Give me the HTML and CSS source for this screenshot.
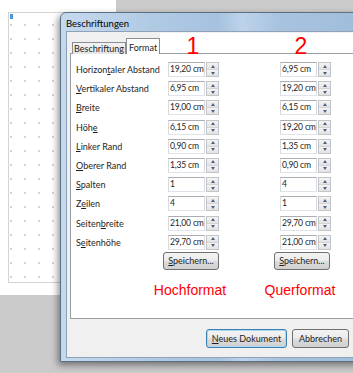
FILE: index.html
```html
<!DOCTYPE html>
<html lang="de">
<head>
<meta charset="utf-8">
<title>Beschriftungen</title>
<link rel="stylesheet" href="styles.css">
</head>
<body>
<div class="screen">
  <div class="page">
    <div class="area"><span class="cursor"></span></div>
  </div>

  <div class="dialog">
    <div class="titlebar">Beschriftungen</div>
    <div class="client">
      <div class="tabs">
        <div class="tab">Beschriftung</div>
        <div class="tab active">Format</div>
        <div class="filler"></div>
      </div>
      <div class="panel">
        <div class="grid">
          <div class="label">Horizon<u>t</u>aler Abstand</div>
          <div class="spinbox"><span class="field">19,20 cm</span><span class="spin"><i class="up"></i><i class="down"></i></span></div>
          <div class="spinbox"><span class="field">6,95 cm</span><span class="spin"><i class="up"></i><i class="down"></i></span></div>

          <div class="label"><u>V</u>ertikaler Abstand</div>
          <div class="spinbox"><span class="field">6,95 cm</span><span class="spin"><i class="up"></i><i class="down"></i></span></div>
          <div class="spinbox"><span class="field">19,20 cm</span><span class="spin"><i class="up"></i><i class="down"></i></span></div>

          <div class="label"><u>B</u>reite</div>
          <div class="spinbox"><span class="field">19,00 cm</span><span class="spin"><i class="up"></i><i class="down"></i></span></div>
          <div class="spinbox"><span class="field">6,15 cm</span><span class="spin"><i class="up"></i><i class="down"></i></span></div>

          <div class="label">Höh<u>e</u></div>
          <div class="spinbox"><span class="field">6,15 cm</span><span class="spin"><i class="up"></i><i class="down"></i></span></div>
          <div class="spinbox"><span class="field">19,20 cm</span><span class="spin"><i class="up"></i><i class="down"></i></span></div>

          <div class="label"><u>L</u>inker Rand</div>
          <div class="spinbox"><span class="field">0,90 cm</span><span class="spin"><i class="up"></i><i class="down"></i></span></div>
          <div class="spinbox"><span class="field">1,35 cm</span><span class="spin"><i class="up"></i><i class="down"></i></span></div>

          <div class="label"><u>O</u>berer Rand</div>
          <div class="spinbox"><span class="field">1,35 cm</span><span class="spin"><i class="up"></i><i class="down"></i></span></div>
          <div class="spinbox"><span class="field">0,90 cm</span><span class="spin"><i class="up"></i><i class="down"></i></span></div>

          <div class="label"><u>S</u>palten</div>
          <div class="spinbox"><span class="field">1</span><span class="spin"><i class="up"></i><i class="down"></i></span></div>
          <div class="spinbox"><span class="field">4</span><span class="spin"><i class="up"></i><i class="down"></i></span></div>

          <div class="label">Z<u>e</u>ilen</div>
          <div class="spinbox"><span class="field">4</span><span class="spin"><i class="up"></i><i class="down"></i></span></div>
          <div class="spinbox"><span class="field">1</span><span class="spin"><i class="up"></i><i class="down"></i></span></div>

          <div class="label">Seiten<u>b</u>reite</div>
          <div class="spinbox"><span class="field">21,00 cm</span><span class="spin"><i class="up"></i><i class="down"></i></span></div>
          <div class="spinbox"><span class="field">29,70 cm</span><span class="spin"><i class="up"></i><i class="down"></i></span></div>

          <div class="label">S<u>e</u>itenhöhe</div>
          <div class="spinbox"><span class="field">29,70 cm</span><span class="spin"><i class="up"></i><i class="down"></i></span></div>
          <div class="spinbox"><span class="field">21,00 cm</span><span class="spin"><i class="up"></i><i class="down"></i></span></div>

          <div class="label"></div>
          <button class="btn save b1"><u>S</u>peichern...</button>
          <button class="btn save b2"><u>S</u>peichern...</button>
        </div>
      </div>
      <div class="footer">
        <button class="btn default"><u>N</u>eues Dokument</button>
        <button class="btn cancel">Abbrechen</button>
      </div>
    </div>

    <span class="note num n1">1</span>
    <span class="note num n2">2</span>
    <span class="note word w1">Hochformat</span>
    <span class="note word w2">Querformat</span>
  </div>
</div>
</body>
</html>
```

FILE: styles.css
```css
* { box-sizing: border-box; }
html, body { margin: 0; padding: 0; }
body {
  width: 353px;
  height: 373px;
  overflow: hidden;
  background: #cbcbcb;
  font-family: Lato, "Liberation Sans", sans-serif;
  color: #1e1e1e;
}
.screen {
  position: relative;
  width: 353px;
  height: 373px;
  overflow: hidden;
  background: #cbcbcb;
}

/* document page behind the dialog */
.page {
  position: absolute;
  left: 0;
  top: 0;
  width: 116px;
  height: 295px;
  background: #fff;
  padding: 12px 0 0 8px;
}
.area {
  height: 271px;
  border: 1px solid #d4d4d4;
  border-right: none;
  background-image: radial-gradient(circle, #d2d2d2 0.7px, transparent 1.1px);
  background-size: 14px 14px;
  background-position: 9px 5px;
  padding: 1px 0 0 1px;
}
.cursor {
  display: block;
  width: 3px;
  height: 5px;
  background: #4f93d8;
}

/* dialog window */
.dialog {
  position: absolute;
  left: 60px;
  top: 12px;
  width: 304px;
  height: 350px;
  border: 1px solid #5f6f82;
  border-radius: 6px 6px 0 0;
  padding: 0 5px 3px 5px;
  display: flex;
  flex-direction: column;
  background: linear-gradient(to right, #c5d9ee 0%, #b1cae4 30%, #a6c2df 52%, #bdd3ea 60%, #a8c3df 72%, #9fbddb 100%);
  box-shadow: -2px 3px 7px rgba(0, 0, 0, 0.45);
}
.titlebar {
  height: 18px;
  font-size: 9.5px;
  line-height: 21px;
  color: #000;
  white-space: nowrap;
}
.client {
  flex: 1;
  background: #f0f0f0;
  border: 1px solid #8fa2b8;
  display: flex;
  flex-direction: column;
  padding: 0 0 0 3px;
}

/* tabs */
.tabs {
  display: flex;
  align-items: flex-end;
  height: 22px;
  margin-bottom: -1px;
  position: relative;
  z-index: 1;
}
.tab {
  height: 12px;
  padding: 0 1px 0 1px;
  margin-left: 2px;
  border: 1px solid #8c8e94;
  border-bottom: none;
  background: linear-gradient(#f3f3f3, #e4e4e4);
  font-size: 9px;
  line-height: 11px;
  white-space: nowrap;
}
.tab.active {
  height: 16px;
  margin-left: 0;
  padding: 3px 2px 0 2px;
  background: #fff;
  border-color: #8c8e94;
}
.filler {
  flex: 1;
  align-self: stretch;
  margin-top: 1px;
  margin-bottom: 1px;
  background: #fff;
}

.panel {
  height: 266px;
  background: #fff;
  border: 1px solid #9a9da4;
  padding: 8px 0 0 5px;
}
.grid {
  display: grid;
  grid-template-columns: 92px 112px 51px;
  grid-auto-rows: 15px;
  row-gap: 4.2px;
  align-items: center;
}
.label {
  font-size: 9px;
  line-height: 15px;
  white-space: nowrap;
}
.spinbox {
  display: flex;
  width: 51px;
  height: 15px;
}
.field {
  flex: 1;
  min-width: 0;
  border: 1px solid #abadb3;
  border-color: #abadb3 #d5d9e0 #dfe3ea #d5d9e0;
  font-size: 8.6px;
  letter-spacing: -0.2px;
  line-height: 13px;
  padding-left: 1px;
  white-space: nowrap;
  overflow: visible;
}
.spin {
  flex: 0 0 13px;
  width: 13px;
  display: flex;
  flex-direction: column;
  border: 1px solid #c2c4c9;
  margin-left: 1px;
  background: #fff;
}
.spin i {
  flex: 1;
  display: flex;
  align-items: center;
  justify-content: center;
  background: linear-gradient(#f4f4f4, #e3e3e3);
}
.spin i.up { border-bottom: 1px solid #d4d4d4; }
.spin i::after {
  content: "";
  width: 0;
  height: 0;
  border-left: 2.5px solid transparent;
  border-right: 2.5px solid transparent;
}
.spin i.up::after { border-bottom: 3px solid #4d6185; }
.spin i.down::after { border-top: 3px solid #4d6185; }

.btn {
  height: 18px;
  border: 1px solid #707070;
  border-radius: 3px;
  background: linear-gradient(#f3f3f3 0%, #ebebeb 48%, #dddddd 52%, #cfcfcf 100%);
  font-family: inherit;
  font-size: 9px;
  color: #1e1e1e;
  padding: 0;
  white-space: nowrap;
}
.save {
  width: 56px;
  margin-top: -2px;
  align-self: start;
  height: 18px;
}
.save.b1 { justify-self: end; margin-right: 61px; }
.save.b2 { justify-self: start; margin-left: -6px; }

.footer {
  display: flex;
  justify-content: flex-end;
  gap: 5px;
  padding: 10px 8px 0 0;
}
.footer .btn { height: 19px; }
.default {
  width: 81px;
  border-color: #3c7fb1;
  box-shadow: inset 0 0 0 1px #a8d8f6;
}
.cancel { width: 57px; }

/* red annotations drawn over the screenshot */
.note {
  position: absolute;
  z-index: 5;
  color: #ff0000;
  font-family: "Liberation Sans", Arial, sans-serif;
  text-align: center;
  white-space: nowrap;
}
.num {
  font-size: 23px;
  line-height: 23px;
  width: 20px;
  top: 22px;
}
.n1 { left: 122px; }
.n2 { left: 230px; }
.word {
  font-size: 14px;
  line-height: 14px;
  width: 100px;
  top: 270px;
}
.w1 { left: 79px; }
.w2 { left: 189px; }
```
